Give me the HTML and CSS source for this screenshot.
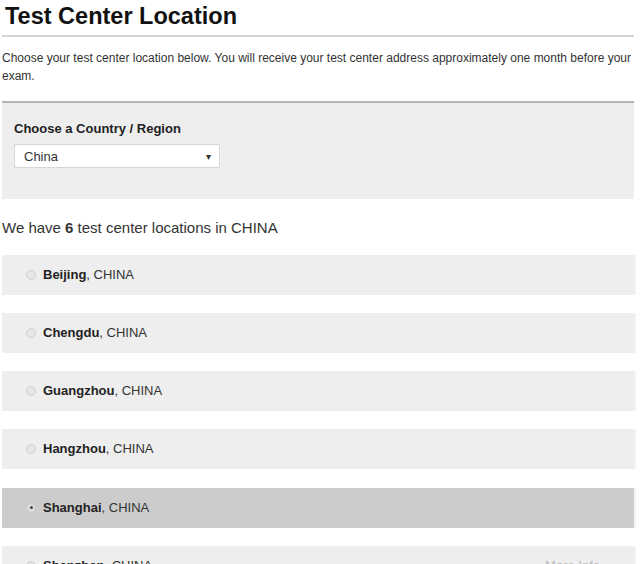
FILE: index.html
```html
<!DOCTYPE html>
<html>
<head>
<meta charset="utf-8">
<link rel="stylesheet" href="styles.css">
</head>
<body>
<div class="page">
  <h1 class="title">Test Center Location</h1>
  <hr class="rule-light">
  <p class="intro">Choose your test center location below. You will receive your test center address approximately one month before your exam.</p>
  <div class="country-box">
    <label class="country-label">Choose a Country / Region</label>
    <div class="select">
      <span>China</span>
      <span class="arrow">&#9662;</span>
    </div>
  </div>
  <p class="count">We have <b>6</b> test center locations in CHINA</p>
  <ul class="locations">
    <li class="loc"><span class="radio"></span><span><b>Beijing</b>, CHINA</span></li>
    <li class="loc"><span class="radio"></span><span><b>Chengdu</b>, CHINA</span></li>
    <li class="loc"><span class="radio"></span><span><b>Guangzhou</b>, CHINA</span></li>
    <li class="loc"><span class="radio"></span><span><b>Hangzhou</b>, CHINA</span></li>
    <li class="loc selected"><span class="radio checked"></span><span><b>Shanghai</b>, CHINA</span></li>
    <li class="loc"><span class="radio"></span><span><b>Shenzhen</b>, CHINA</span><span class="more">More Info</span></li>
  </ul>
</div>
</body>
</html>
```

FILE: styles.css
```css
html, body {
  margin: 0;
  padding: 0;
  background: #fff;
}
body {
  font-family: "Liberation Sans", Arial, sans-serif;
  color: #222;
}
.page {
  margin: 0 6px 0 2px;
  width: 632px;
}
.title {
  margin: 0;
  padding: 2px 0 0 3px;
  font-size: 23.5px;
  line-height: 28px;
  font-weight: bold;
  color: #111;
}
.rule-light {
  margin: 5px 0 0;
  border: 0;
  border-top: 2px solid #d6d6d6;
  height: 0;
}
.intro {
  margin: 12px 0 0;
  font-size: 12px;
  line-height: 18px;
  color: #333;
}
.country-box {
  margin-top: 16px;
  border-top: 2px solid #b5b5b5;
  background: #eee;
  height: 98px;
  padding: 17px 12px 0;
  box-sizing: border-box;
}
.country-label {
  display: block;
  font-size: 13px;
  font-weight: bold;
  line-height: 18px;
  color: #222;
}
.select {
  margin-top: 6px;
  width: 206px;
  height: 24px;
  box-sizing: border-box;
  background: #fff;
  border: 1px solid #d8d8d8;
  display: flex;
  align-items: center;
  justify-content: space-between;
  padding: 0 8px 0 9px;
  font-size: 13px;
  color: #333;
}
.arrow {
  font-size: 10px;
  color: #333;
}
.count {
  margin: 19px 0 0;
  font-size: 15px;
  line-height: 20px;
  color: #333;
}
.locations {
  list-style: none;
  margin: 17px 0 0;
  padding: 0;
  display: flex;
  flex-direction: column;
  gap: 18px;
}
.loc {
  height: 40px;
  background: #eee;
  display: flex;
  align-items: center;
  padding-left: 24px;
  padding-bottom: 1px;
  box-sizing: border-box;
  font-size: 13px;
  color: #333;
  box-shadow: 2px 0 0 #f3f3f3;
}
.loc b {
  color: #222;
}
.loc.selected {
  background: #ccc;
  margin-top: 1px;
}
.radio {
  width: 10px;
  height: 10px;
  border-radius: 50%;
  border: 1px solid #d0d0d0;
  background: #e6e6e6;
  margin-right: 7px;
  box-sizing: border-box;
  position: relative;
}
.radio.checked {
  border-color: #c8c8c8;
  background: #ddd;
}
.radio.checked::after {
  content: "";
  position: absolute;
  left: 2.5px;
  top: 2.5px;
  width: 3px;
  height: 3px;
  border-radius: 50%;
  background: #444;
}
.more {
  margin-left: auto;
  margin-right: 34px;
  color: #bbb;
  font-size: 13px;
}
```
